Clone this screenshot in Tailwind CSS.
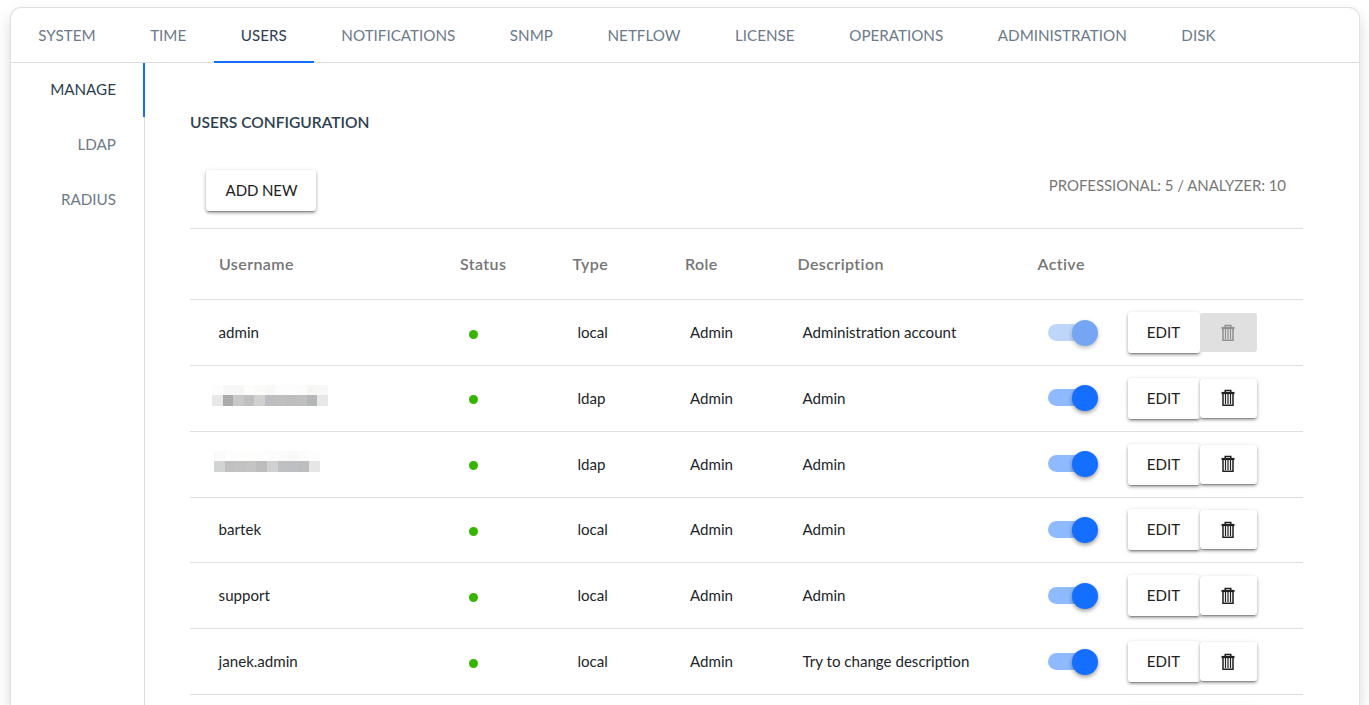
<!DOCTYPE html>
<html lang="en">
<head>
<meta charset="utf-8">
<title>Users configuration</title>
<script src="https://cdn.jsdelivr.net/npm/@tailwindcss/browser@4"></script>
</head>
<body class="h-[705px] overflow-hidden bg-white pt-[7px] pl-[10px] font-['Lato',sans-serif] text-[15.2px] text-[#212529]">
<div class="flex h-[698px] w-[1350px] flex-col overflow-hidden rounded-t-[11px] border border-b-0 border-[#dee0e3] bg-white shadow-[0_8px_16px_rgba(0,0,0,0.15)]">
  <nav class="flex h-[55px] shrink-0 border-b border-[#dcdcdc] leading-[54px] text-[#6c7a89]">
    <a class="px-[27.3px]">SYSTEM</a>
    <a class="px-[27.3px]">TIME</a>
    <a class="h-[55px] border-b-2 border-[#146eff] px-[27.3px] text-[#2c3e50]">USERS</a>
    <a class="px-[27.3px]">NOTIFICATIONS</a>
    <a class="px-[27.3px]">SNMP</a>
    <a class="px-[27.3px]">NETFLOW</a>
    <a class="px-[27.3px]">LICENSE</a>
    <a class="px-[27.3px]">OPERATIONS</a>
    <a class="px-[27.3px]">ADMINISTRATION</a>
    <a class="px-[27.3px]">DISK</a>
  </nav>
  <div class="flex min-h-0 grow">
    <aside class="flex w-[134px] shrink-0 flex-col border-r border-[#dcdcdc] text-right leading-[53px] text-[#6c7a89]">
      <a class="-mr-px h-[54px] border-r-2 border-[#146eff] pr-[27px] text-[#2c3e50]">MANAGE</a>
      <a class="mt-px h-[54px] pr-[28px]">LDAP</a>
      <a class="mt-px h-[54px] pr-[28px]">RADIUS</a>
    </aside>
    <main class="ml-[45px] w-[1113px] pt-[49px]">
      <h1 class="h-5 text-[15.55px] font-semibold leading-5 text-[#2c3e50]">USERS CONFIGURATION</h1>
      <div class="flex h-[96px] justify-between pt-[38px] pr-[17px] pl-4">
        <button class="h-[41px] w-[110px] rounded-[3px] bg-white pl-px text-[15px] tracking-[-0.1px] text-[#212121] shadow-[0_3px_1px_-2px_rgba(0,0,0,0.2),0_2px_3px_0_rgba(0,0,0,0.3),0_1px_5px_0_rgba(0,0,0,0.12)]">ADD NEW</button>
        <span class="pt-[5px] text-[15px] leading-5 tracking-[-0.06px] text-[#777]">PROFESSIONAL: 5 / ANALYZER: 10</span>
      </div>
      <div class="grid h-[72.1px] grid-cols-[241px_112.5px_112.5px_112.5px_240px_1fr] items-center border-y border-[#dfdfdf] pl-[29px] text-[16px] font-semibold tracking-[0.4px] text-[#757575]">
        <span>Username</span><span>Status</span><span>Type</span><span>Role</span><span>Description</span><span>Active</span>
      </div>
      <div id="rows"></div>
    </main>
  </div>
</div>
<script>
const users = [
  { name: 'admin', type: 'local', desc: 'Administration account', locked: true },
  { mask: ['m-0 -ml-[7px]', ['#e8e8e8','#aaabad','#c8c8c8','#bfbfbf','#d1d1d1','#bcbdc0','#bfbfbf','#bdbdbd','#bfbfbf','#b5b6b8','#e5e8e7'], ['#fcfcfc','#f7f7f7','#f7f7f5','#fdfdfc','#fbfbfa','#f8f8f6','#fdfdfd','#fdfdfb','#fcfcfc','#f6f6f4','#f8f8f8'], 116], type: 'ldap', desc: 'Admin' },
  { mask: ['m-0 -ml-[5px]', ['#d2d4d3','#c0c0c0','#c2c2c2','#c4c4c4','#bdbdbd','#d0d0d0','#bfc0c2','#bebfc2','#bdbdbd','#e6e6e6'], ['#fafafa','#fdfdfd','#fdfdfb','#fdfdfc','#fdfdfc','#fcfcfc','#fbfbfb','#f9f9f8','#fcfcfc','#fefefe'], 106], type: 'ldap', desc: 'Admin' },
  { name: 'bartek', type: 'local', desc: 'Admin' },
  { name: 'support', type: 'local', desc: 'Admin' },
  { name: 'janek.admin', type: 'local', desc: 'Try to change description' }
];
const strip = (colors, cls) => `<div class="${cls}">${colors.map(c => `<i class="flex-1" style="background:${c}"></i>`).join('')}</div>`;
const masked = m => `<div class="${m[0]}" style="width:${m[3]}px">${strip(m[2], 'flex h-[10px]')}${strip(m[1], 'mb-[5px] flex h-[11px]')}</div>`;
const trash = `<svg class="h-[18px] w-[14px]" viewBox="0 0 14 18" fill="none" stroke="currentColor"><path d="M4.2 3V1.6H9.8V3" stroke-width="1.5"/><path d="M.5 4H13.5" stroke-width="2.2"/><path d="M2 4.5V16.2H12V4.5" stroke-width="1.5"/><path d="M4.5 5V15M7 5V15M9.5 5V15" stroke-width="1.2"/></svg>`;
document.getElementById('rows').innerHTML = users.map(u => `
<div class="grid h-[65.83px] grid-cols-[241px_117.5px_112.5px_112.5px_245px_80px_1fr] items-center border-b border-[#dfdfdf] pl-[29px] text-[15.1px]">
  ${u.mask ? masked(u.mask) : `<span class="-mt-[0.5px] -ml-[0.4px]">${u.name}</span>`}
  <i class="mt-[3px] ml-[9px] size-[9px] rounded-full bg-[#35b500]"></i>
  <span class="-mt-[0.5px]">${u.type}</span><span class="-mt-[0.5px]">Admin</span><span class="-mt-[0.5px]">${u.desc}</span>
  <div class="${u.locked ? 'relative mt-px h-[26px] w-[50px]' : 'relative h-[26px] w-[50px]'}">
    <i class="${u.locked ? 'absolute top-[4px] left-0 h-[17px] w-[44px] rounded-full bg-[#bed6fa]' : 'absolute top-[4px] left-0 h-[17px] w-[44px] rounded-full bg-[#146eff]/48'}"></i>
    <i class="${u.locked ? 'absolute top-0 right-0 size-[26px] rounded-full bg-[#76a6f3] shadow-[0_2px_4px_rgba(0,0,0,0.25)]' : 'absolute top-0 right-0 size-[26px] rounded-full bg-[#146eff] shadow-[0_2px_4px_rgba(0,0,0,0.4)]'}"></i>
  </div>
  <div class="flex items-center">
    <button class="h-[41px] w-[72px] rounded-[3px] bg-white pb-[0.5px] text-[#212121] shadow-[0_3px_1px_-2px_rgba(0,0,0,0.2),0_2px_3px_0_rgba(0,0,0,0.3),0_1px_5px_0_rgba(0,0,0,0.12)]">EDIT</button>
    <button class="${u.locked ? 'flex h-[39px] w-[57px] items-center justify-center rounded-[3px] bg-[#e0e0e0] pr-px text-[#909090]' : 'flex h-[39px] w-[57px] items-center justify-center rounded-[3px] bg-white pr-px text-[#212121] shadow-[0_3px_1px_-2px_rgba(0,0,0,0.2),0_2px_3px_0_rgba(0,0,0,0.3),0_1px_5px_0_rgba(0,0,0,0.12)]'}">${trash}</button>
  </div>
</div>`).join('') + `
<div class="flex h-[9px] items-end pl-[938px]">
  <i class="h-px w-[72px] shadow-[0_1px_5px_0_rgba(0,0,0,0.12)]"></i>
  <i class="h-px w-[57px] shadow-[0_1px_5px_0_rgba(0,0,0,0.12)]"></i>
</div>`;
</script>
</body>
</html>
